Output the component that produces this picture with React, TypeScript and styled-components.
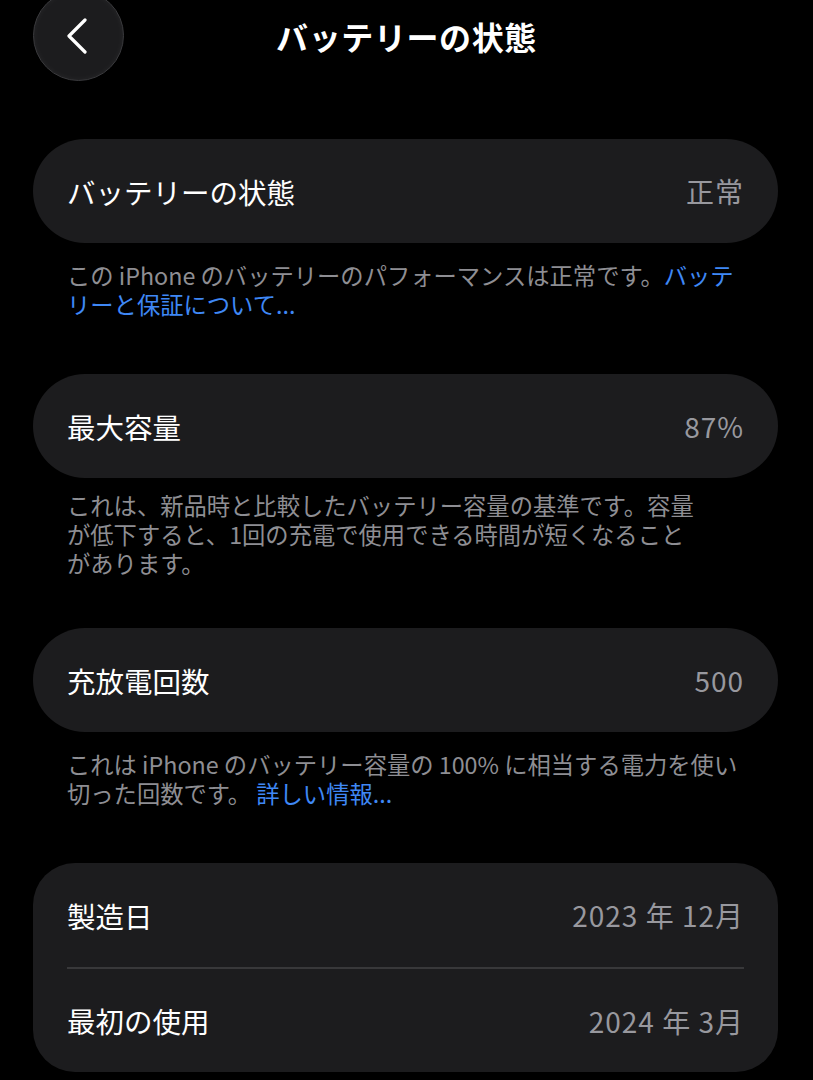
import React from "react";
import styled, { createGlobalStyle } from "styled-components";

const GlobalStyle = createGlobalStyle`
  html, body {
    margin: 0;
    padding: 0;
    background: #000;
  }
  body {
    font-family: "Noto Sans CJK JP", "Noto Sans", sans-serif;
    color: #fff;
    -webkit-font-smoothing: antialiased;
  }
`;

type Segment = { text: string; link?: boolean };

interface Section {
  rows: { label: string; value: string }[];
  note?: Segment[][];
}

const sections: Section[] = [
  {
    rows: [{ label: "バッテリーの状態", value: "正常" }],
    note: [
      [
        { text: "この iPhone のバッテリーのパフォーマンスは正常です。" },
        { text: "バッテ", link: true },
      ],
      [{ text: "リーと保証について...", link: true }],
    ],
  },
  {
    rows: [{ label: "最大容量", value: "87%" }],
    note: [
      [{ text: "これは、新品時と比較したバッテリー容量の基準です。容量" }],
      [{ text: "が低下すると、1回の充電で使用できる時間が短くなること" }],
      [{ text: "があります。" }],
    ],
  },
  {
    rows: [{ label: "充放電回数", value: "500" }],
    note: [
      [{ text: "これは iPhone のバッテリー容量の 100% に相当する電力を使い" }],
      [
        { text: "切った回数です。 " },
        { text: "詳しい情報...", link: true },
      ],
    ],
  },
  {
    rows: [
      { label: "製造日", value: "2023 年 12月" },
      { label: "最初の使用", value: "2024 年 3月" },
    ],
  },
];

const App: React.FC = () => (
  <>
    <GlobalStyle />
    <Page>
      <Header>
        <BackButton aria-label="戻る">
          <svg width="22" height="36" viewBox="0 0 22 36" fill="none">
            <path
              d="M19 2 L3 18 L19 34"
              stroke="#fff"
              strokeWidth="3.2"
              strokeLinecap="round"
              strokeLinejoin="round"
            />
          </svg>
        </BackButton>
        <Title>バッテリーの状態</Title>
        <span />
      </Header>

      {sections.map((section, i) => (
        <Group key={i}>
          <Card $multi={section.rows.length > 1}>
            {section.rows.map((row, j) => (
              <Row key={row.label} $divider={j > 0}>
                <Label>{row.label}</Label>
                <Value>{row.value}</Value>
              </Row>
            ))}
          </Card>
          {section.note && (
            <Note $tight={section.note.length > 2}>
              {section.note.map((line, k) => (
                <NoteLine key={k}>
                  {line.map((seg, s) =>
                    seg.link ? (
                      <Link key={s}>{seg.text}</Link>
                    ) : (
                      <span key={s}>{seg.text}</span>
                    )
                  )}
                </NoteLine>
              ))}
            </Note>
          )}
        </Group>
      ))}
    </Page>
  </>
);

const Page = styled.div`
  width: 813px;
  height: 1080px;
  overflow: hidden;
  padding: 0 35px 0 33px;
  box-sizing: border-box;
  background: #000;
`;

const Header = styled.header`
  display: grid;
  grid-template-columns: 1fr auto 1fr;
  align-items: center;
  margin-top: -10px;
  margin-bottom: 58px;
  margin-right: -2px;
`;

const BackButton = styled.button`
  width: 91px;
  height: 91px;
  border-radius: 50%;
  background: #1c1c1e;
  border: 1.5px solid #3a3a3d;
  display: flex;
  align-items: center;
  justify-content: center;
  padding: 0 4px 0 0;
  margin: 0;
  cursor: pointer;
  box-shadow: inset 0 0 6px rgba(255, 255, 255, 0.05);
`;

const Title = styled.h1`
  margin: 0;
  padding-top: 0;
  font-size: 32px;
  font-weight: 700;
  letter-spacing: 0.6px;
  color: #fff;
`;

const Group = styled.section`
  display: flex;
  flex-direction: column;
`;

const Card = styled.div<{ $multi: boolean }>`
  background: #1c1c1e;
  border-radius: ${({ $multi }) => ($multi ? "42px" : "52px")};
  padding: 0 34px;
`;

const Row = styled.div<{ $divider: boolean }>`
  height: ${({ $divider }) => ($divider ? "105px" : "104px")};
  display: flex;
  align-items: center;
  justify-content: space-between;
  border-top: ${({ $divider }) => ($divider ? "2px solid #38383a" : "none")};
  box-sizing: border-box;
`;

const Label = styled.span`
  font-size: 28.5px;
  color: #fff;
`;

const Value = styled.span`
  font-size: 28px;
  letter-spacing: 1px;
  color: #98989e;
`;

const Note = styled.div<{ $tight: boolean }>`
  padding: ${({ $tight }) => ($tight ? "13px 34px 50px" : "18px 34px 55px")};
  font-size: 23.3px;
  line-height: 29px;
  color: #8e8e93;
`;

const NoteLine = styled.div`
  white-space: nowrap;
`;

const Link = styled.span`
  color: #3f88f5;
`;

export default App;
